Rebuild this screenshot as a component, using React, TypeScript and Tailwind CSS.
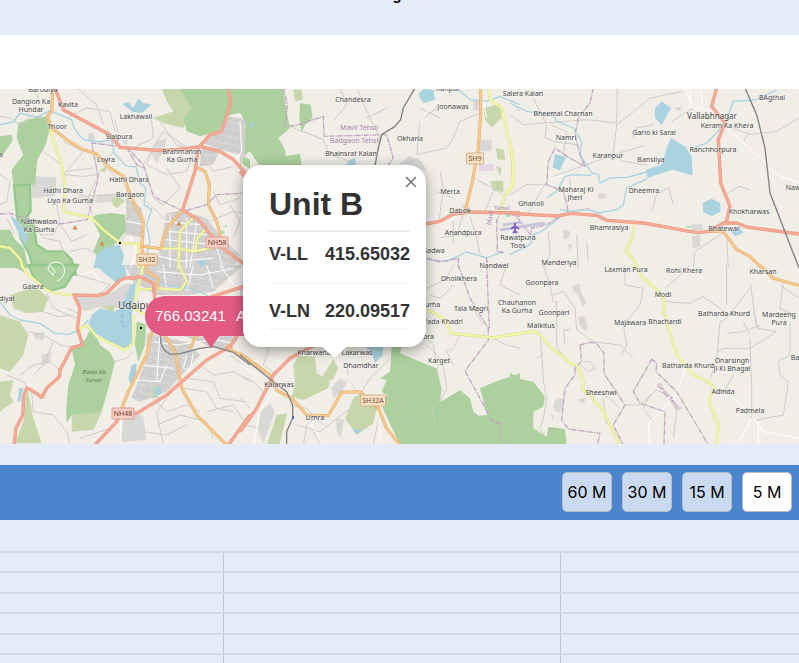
import { useState } from 'react';

type Layer =
  | 'built'
  | 'grey'
  | 'forest'
  | 'reserve'
  | 'scrub'
  | 'water'
  | 'river'
  | 'minor'
  | 'street'
  | 'boundary'
  | 'secondary'
  | 'primary'
  | 'trunk'
  | 'rail';

type Tile = { x: number; y: number } & Partial<Record<Layer, string>>;

// every tile is drawn at 3x and scaled down
const tiles: Tile[] = [
  {
    x: 0,
    y: 88,
    built:
      'M500 375L545 368L620 390L665 450L720 500L700 540H455L480 480ZM640 130L690 85L735 95L740 150L720 200L660 185L610 165ZM380 330L425 360L435 450L375 440ZM605 170L660 185L640 230L600 235Z',
    grey: 'M95 265L170 268L165 325L95 330ZM450 190L470 160L500 150L490 185L470 225ZM290 320L370 315L350 340L290 345ZM265 135L280 135L285 155L265 160ZM370 150L385 152L380 170L368 168Z',
    forest:
      'M0 145L35 140L38 158L12 195L0 205ZM140 85L148 130L135 175L112 215L105 290L40 290L35 245L70 200L50 150L55 105L90 92ZM290 380L330 375L375 380L378 430L345 468L300 515L280 490L300 440L275 390ZM540 2H750V95L720 75L690 80L650 130L600 145L560 130L550 90L575 60ZM730 205L750 215V240L728 230ZM0 425L30 425L45 455L72 480L85 540H0Z',
    reserve: 'M42 292L90 290L92 370L78 390L100 400L110 470L140 490L190 490L215 515L228 560H105L88 500L62 450L52 390Z',
    scrub: 'M485 0H540L578 50L550 120L490 105L460 90L520 70L500 40ZM335 330L355 325L375 340L350 360L338 350ZM300 245L320 235L315 255Z',
    water:
      'M368 48L385 42L400 60L415 30L430 45L455 50L425 75L398 72ZM30 380L55 400L85 440L75 475L55 435ZM280 540L290 500L312 480L358 470L372 500L365 540ZM592 520L608 514L622 524L602 536Z',
    river:
      'M0 110L40 102L60 75L110 88L150 68L215 95L225 125L250 155L300 162L335 155L342 195L380 235L408 236L420 285L437 300L432 350L455 365L440 410L450 460L440 500',
    minor:
      'M0 85L30 90L60 110L90 85L142 88M100 0L120 40M210 85L260 60L330 70L345 130M345 95L355 135M455 95L460 150L400 180M230 0L290 50L310 110M190 160L250 190L190 260L250 265L290 260M130 190L190 235M95 400L130 450L180 460L200 520M165 330L180 400L160 440L120 440M180 410L215 460L260 440M195 300L290 340M200 250L280 240M200 340L250 325L350 320M340 190L310 230L350 270M300 250L260 340L280 380M380 270L380 340L385 430L360 460M460 180L440 230L500 260L560 250L580 200M430 230L490 130L580 190M480 100L530 170L590 190M500 240L540 300L490 350L460 330M440 340L500 400L530 440M600 200L640 250L700 235M640 310L660 350L720 330M690 350L720 400L700 450M630 400L700 370L750 380M0 260L30 280L20 340L0 350M20 390L40 430L20 460M210 490L260 480L290 500M120 500L150 530',
    street:
      'M380 400L430 410M390 440L410 490L390 540M490 400L600 410M500 430L620 440M495 455L640 470M510 380V540M560 390V540M590 400L570 540M445 390L440 460L480 500M650 480L670 540M720 100L725 190L705 220M460 500L540 520L640 510',
    boundary:
      'M262 395L295 270L275 165L380 178L430 230L460 325L550 370L620 350L650 320L750 315M0 378L30 376L90 395L180 408L262 395M380 178L410 230L430 240',
    secondary:
      'M142 85L160 160L185 230L195 300L190 370L275 390L310 425L360 465L430 468M480 482L535 482L585 490L640 478M580 388L540 430L535 540M615 425L592 450L585 490M0 475L30 480L62 515L68 540M415 470V540',
    primary:
      'M158 0L155 70L142 85L155 120L200 155L250 185L290 198L330 240L370 265L395 330L430 400L425 480L440 540M590 238L615 250L628 290L625 350L650 400L668 465M548 365L510 410L490 450L482 482L430 475',
    trunk:
      'M165 0L190 65L330 140L360 178L480 188L560 182L600 175L660 190L700 215L750 270M685 0L692 45L665 130L630 140L595 180L585 250L548 365L600 400L640 450L680 490L735 530',
  },
  {
    x: 0,
    y: 265,
    built:
      'M375 0H730L640 80L560 90H470L400 50ZM440 205L560 230L600 270L500 380L420 410L395 400L440 280ZM520 200L720 210L690 260L620 240Z',
    grey: 'M230 95L330 85L380 55L400 60L395 80L360 130L300 125L250 140ZM125 270L155 260L150 290L125 305ZM100 205L135 200L130 225L105 222ZM370 425L430 455L440 525L365 530Z',
    forest:
      'M270 195L290 215L300 240L330 262L345 290L325 370L305 440L215 450L200 475L198 440L205 360L225 300L215 250L255 225ZM410 170L438 178L435 240L415 290L405 240ZM30 0H70L80 25L60 15Z',
    reserve: 'M85 0L105 45L150 78L195 65L235 0Z',
    scrub:
      'M30 90L75 75L110 65L145 100L130 140L80 145L40 130ZM0 150L60 170L85 210L70 270L30 320L0 310ZM0 350L40 345L30 390L40 410L0 440ZM82 370L100 460L125 535H45L70 470ZM215 440H305L280 495L215 500ZM300 125L345 120L340 142ZM455 370L470 360L475 398L458 400Z',
    water:
      'M285 0H375L380 30L355 60L320 30ZM275 150L300 130L340 140L365 130L392 60L408 50L395 160L400 240L375 255L320 225L262 190ZM395 300L410 295L405 350L395 365L385 340ZM462 370L482 363L485 385L465 396ZM58 370L70 368L62 410L52 408Z',
    river: 'M0 110L30 150L60 165L120 175L165 205L205 208L240 195L265 165M440 30L500 60L570 70L620 90L640 150',
    minor:
      'M140 85L160 130L230 160M130 140L175 155L220 150M85 200L130 210L180 240L215 248M60 330L100 300L150 290L180 315M20 330L70 350L90 380L140 400M100 330L130 300L160 230M200 130L235 145M95 380L100 440L160 450L200 500L210 540M240 520L330 490M345 290L380 280L400 260M290 95L330 60L270 40L230 30M460 400L500 440L560 420L600 440M470 480L540 450L620 470L640 520M560 340L640 350L660 400L740 410M600 300L640 330L700 320L750 350M620 440L700 420L740 480M430 500L500 510L560 480M690 270L730 300M550 370L620 380L650 430L700 440M500 400L470 440L490 540M0 200L40 230',
    street:
      'M460 230L530 240L640 225M560 270L550 310L570 315L580 265M400 345L480 350L500 300M480 200L470 350M360 525L365 460M470 20L600 30L700 10M490 0L500 80M580 0L560 80M620 0L640 70M240 30L280 20L300 50M420 300L520 310M660 0L700 60M590 210L700 235M150 0L165 20L155 30',
    secondary:
      'M65 0L80 25L140 75L165 85L222 90M410 75L470 70L540 75L560 50L537 0M400 150V235L375 255L290 215L262 180L240 190L242 205M430 0L415 60L400 130L440 150',
    primary:
      'M350 470L385 380L440 270L455 200M490 205L525 260L545 370L590 450L680 540M440 0V20L475 40L470 75M590 210L570 250M680 240L700 258L750 285',
    trunk:
      'M380 38L360 45L320 85L290 92L222 90L240 130L232 190L248 240L215 248L180 315L178 335L140 370L125 397L95 375L80 370L72 390L68 450L48 490L42 540M380 38L400 40L420 35L460 55L465 110M750 58L620 100M285 540L350 470L365 440L410 445L500 390L620 285L690 245L720 200M685 540L750 450',
    rail: 'M480 200L483 235L492 255L510 268L540 266L600 250L640 245L700 262L750 300',
  },
  {
    x: 240,
    y: 88,
    built: 'M0 90L15 100L20 200L0 240Z',
    grey: 'M715 155H755V190H715ZM700 40L720 35V70L700 65ZM480 225L510 205L545 220L560 250L540 240ZM665 350L690 355L680 380Z',
    forest:
      'M0 2H130L138 60L150 120L115 150L135 185L140 225L125 235H60L30 190L12 200L18 110L0 70ZM180 45L212 50L218 90L195 110L185 135L178 90ZM130 205L180 198L185 235H110Z',
    scrub:
      'M160 5H185L188 35L165 40ZM730 60L780 48L785 90L755 118L735 95ZM768 180L792 185L795 215L772 215ZM750 280L790 278L790 312L760 308ZM768 235L785 240L780 265Z',
    water: 'M535 20L550 3L580 5L585 35L550 45ZM325 220L345 208L348 232H318ZM28 110L40 98L38 125Z',
    river: 'M650 0L690 35L740 40L780 25L840 50M560 515L620 520L680 492L740 510L790 490',
    minor:
      'M350 0L385 80L420 150M590 60L540 100L530 200L620 180L640 150L660 100L720 75M150 115L250 155L270 200L330 220M600 250L610 300L597 400M700 270L760 300L790 320M760 310L735 370M670 380L650 440L600 450M690 385L710 450L720 500M590 310L640 330M480 230L540 210M540 60L600 90M820 50L840 70M300 0L320 50L280 100M380 90L440 60M640 400L640 470',
    street: 'M730 40L740 90M540 110L560 70L600 40',
    boundary:
      'M130 0L142 50L135 115L170 112L250 85L252 145L440 140L460 210L445 232M560 510L600 522L660 510M840 385L780 375L770 400L772 490L790 495M655 510V540M740 510V540',
    secondary: 'M745 0L750 35L785 60L800 130L818 200L820 290L790 330L785 370',
    primary: 'M722 0V80L715 180L695 290L675 370',
    trunk: 'M555 408L600 400L640 378L690 372L840 375M0 250L12 265',
    rail: 'M525 0L490 60L482 95L465 115L425 140L415 180L405 232',
  },
  {
    x: 240,
    y: 265,
    built: 'M0 60L10 70V160L0 150Z',
    grey: 'M60 440L90 415L105 440L70 535L55 500ZM275 370L300 340L320 350L305 380L280 400ZM288 460L312 462L302 520L290 500ZM250 325L275 308L280 325L260 342Z',
    forest:
      'M455 245L485 242L480 265L540 290L590 310L605 370L600 410L620 400L660 375L690 400L700 440L715 452L742 450L720 370L765 350L840 325V540H480L428 430L440 390L425 380L440 345L420 340L450 320Z',
    scrub:
      'M160 300L175 272L225 275L230 325L270 345L265 370L190 405L155 395L165 360ZM280 282L295 310L278 345L245 340ZM340 400L360 385L410 430L400 475L350 510L315 460ZM110 450L142 445L118 540H80Z',
    water: 'M370 242L430 240L428 270L405 295L395 262ZM335 490L365 495L350 508Z',
    minor:
      'M320 300L325 340L350 375M380 350L430 300L450 280M540 200L580 240L590 300M560 240L600 280L590 330M640 60L600 100L570 90M660 210L640 250L620 260L640 300M610 300L620 370L600 410L578 430L585 470M700 130L730 180M760 220L800 240L840 250M0 400L30 430M0 330L40 350L70 380M150 420L200 430L250 480M170 480L240 500L330 430M190 540L200 480L240 450M240 540L220 500M360 390L390 340M420 440L400 540M10 480L60 490M90 240L70 300L110 330M640 0L620 40L560 70M800 0L780 60L840 90',
    street: 'M0 300L50 330M320 330L355 378M100 380L60 440L40 540M415 430L420 530M210 470L245 530',
    boundary: 'M655 0L690 100L745 190V225L675 318L720 400L755 468L780 475V520L800 540M740 0L748 190',
    secondary: 'M555 130L610 160L635 205L760 218L840 205',
    primary: 'M0 265L90 330L110 375L155 400L200 450L265 452L305 382L360 380L415 430L440 490L480 540',
    trunk: 'M220 242L150 280L100 330L75 380L50 430L0 500',
    rail: 'M0 270L100 350L140 380L158 420V460L140 500V540',
  },
  {
    x: 510,
    y: 88,
    grey: 'M540 410L578 408V425L545 430ZM545 445L572 440L570 475L550 482ZM160 425L180 430L178 450L160 455ZM172 470L188 468L180 488ZM490 60L515 55L510 68ZM265 315L290 318L285 330L265 335ZM30 10L45 12L38 20Z',
    water:
      'M435 60L455 40L483 60L455 112L435 90ZM482 150L525 175L545 205L548 262L485 245L412 270L408 245L455 230L470 180ZM135 198L168 208L150 247L128 238ZM578 345L605 332L630 345L632 370L605 385L580 372ZM662 430L690 420L700 435L675 445Z',
    river:
      'M0 45L50 70L130 80L140 100L190 120L215 160L210 200L245 255L265 260L270 285L300 270L350 268L410 252M412 272L350 300L340 350L320 365L265 375L235 365L185 370L150 365M110 330L140 310L165 265L190 260L245 262M800 5L740 35L670 40L650 95L620 135L590 165L540 185M0 500L60 470L70 440L95 430L160 380',
    minor:
      'M0 80L40 110L230 95L320 105M70 30L110 110L105 150L130 160L200 170M310 195L320 110L360 80L420 30L520 10M320 110L322 0M55 375L115 270L230 230L310 200L405 172M310 200L340 220L415 232M425 370L440 320L475 300L490 350M645 320L690 295L720 305M640 435L555 490L550 540M650 440L655 540M115 430L120 500L100 540M670 120L720 140L800 130L867 90M180 270L185 370L240 360M0 320L50 290L110 290M120 110L170 130L160 200M200 440L205 540M230 460L235 520M370 150L380 120L430 110M700 160L720 130M485 100L550 60',
    street:
      'M520 0L550 50L580 60L570 0M550 60L640 75M650 120L740 200L800 260L867 285M540 0V60M90 300L115 270L190 260M185 390L180 300',
    boundary:
      'M250 0L240 45L205 90L195 140L210 200L225 235L170 205L135 180L115 220L110 290L160 310L175 370L110 410L65 420L62 440L50 425L15 380',
    secondary: 'M372 407L370 440L347 490L372 515L382 540M0 170L10 230L5 290L0 310',
    primary: 'M600 430H640L680 485L720 505L755 540',
    trunk:
      'M0 376L140 384L185 376L260 382L290 397L400 405L560 434L600 430L640 405H680L710 417L867 438M620 0L605 55L645 105L625 155L632 285L660 355L648 405',
    rail: 'M705 0L740 80L765 180L780 315L867 540',
  },
  {
    x: 510,
    y: 265,
    grey: 'M187 60L210 58L212 80L228 110L218 125L205 90L190 80ZM205 155L225 155L233 185L225 198L208 180ZM135 405L160 400V425L145 445L130 430ZM120 448L132 450L128 465ZM200 405L228 398L222 415Z',
    forest: 'M0 320L20 340L70 350L105 395L100 425L70 440V490L110 515L115 485L165 492L170 540H0Z',
    minor:
      'M100 0L120 60L130 110L140 110V250L165 275M90 200L95 270L80 280M95 260L100 350L110 400L100 460L90 490L105 515M130 90L160 80L195 130L200 195L250 230L330 240L370 280M345 0V60L400 70L390 120L340 180L350 240L335 270M465 110L540 115L580 95L630 130L650 150L720 140M540 0L500 40L465 70M650 0V120M720 70L650 160L630 170L620 290L600 340M730 140L745 190L800 200L720 250L640 250L625 260M722 60L740 190M720 220L725 360V460M820 50L810 130L850 150M840 170V270L805 290L810 330L835 350L820 450L740 465M750 180L700 200L650 205M180 195L160 195L165 240M220 290L240 290L255 310L235 320L210 300M345 420L390 420L440 375L470 390M420 390L400 430L430 470M480 390L500 440L490 520M660 380L610 370M700 170L720 210M810 60L867 100M230 370L300 400L330 430M640 385L670 330M280 400L290 480',
    street: 'M525 310L510 360L490 400L440 450L415 480L420 540M660 390L725 450L760 500L867 520M725 460L700 510L670 540M745 470V540',
    boundary:
      'M210 240L240 232L260 235L282 265V325L345 420L310 480L340 540M210 240L215 290L195 305V330L165 370L155 465L175 492L270 505L262 540M425 282L440 295L438 320L500 380L560 480L595 540M425 282L410 310L370 380L390 415L465 440L462 540',
    secondary:
      'M0 210L70 200L90 210L125 250L160 275L180 295L200 300L220 350L218 375L245 390L250 405L275 430L310 500L330 540M375 0L400 40L435 70L460 100L463 140L475 190L500 270L550 330L595 350L610 365L598 410L625 480L620 540',
    primary: 'M750 0L790 40L867 62',
  },
];

const layers: { key: Layer; fill?: string; stroke?: string; width?: number; dash?: string }[] = [
  { key: 'built', fill: 'url(#streets)' },
  { key: 'grey', fill: '#dad8d6' },
  { key: 'scrub', fill: '#c8d7ab' },
  { key: 'forest', fill: '#add19e' },
  { key: 'reserve', fill: '#add19e', stroke: '#93c88b', width: 7 },
  { key: 'water', fill: '#aad3df' },
  { key: 'minor', stroke: '#cfccca', width: 3 },
  { key: 'street', stroke: '#ffffff', width: 3 },
  { key: 'river', stroke: '#aad3df', width: 4 },
  { key: 'boundary', stroke: '#c3a5c2', width: 4, dash: '16 3 4 3' },
  { key: 'secondary', stroke: '#d3d689', width: 8 },
  { key: 'secondary', stroke: '#f4f8a5', width: 6 },
  { key: 'primary', stroke: '#dda967', width: 9 },
  { key: 'primary', stroke: '#fac98b', width: 6 },
  { key: 'trunk', stroke: '#e59780', width: 10 },
  { key: 'trunk', stroke: '#f6aa95', width: 7 },
  { key: 'rail', stroke: '#7c7c7c', width: 4 },
  { key: 'rail', stroke: '#b5b5b5', width: 1, dash: '8 8' },
];

const places: [string, number, number][] = [
  ['Barodiya', 43, 92],
  ['Dangion Ka', 31, 104],
  ['Hundar', 31, 112],
  ['Kavita', 68, 107],
  ['Lakhawali', 136, 119],
  ['Thoor', 57, 129],
  ['Sialpura', 119, 139],
  ['Loyra', 106, 162],
  ['Brahmanon', 182, 154],
  ['Ka Gurha', 182, 162],
  ['Hathi Dhara', 129, 182],
  ['Bargaon', 130, 197],
  ['Hathi Dhara', 63, 193],
  ['Liyo Ka Gurha', 70, 203],
  ['Nathwaton', 39, 224],
  ['Ka Gurha', 39, 232],
  ['Galera', 33, 289],
  ['diyat', 7, 301],
  ['a', 1, 157],
  ['Chandesra', 353, 102],
  ['Joonawas', 453, 109],
  ['Kanpur', 448, 91],
  ['Salera Kalan', 523, 96],
  ['Okharia', 410, 141],
  ['Bhainsrat Kalan', 351, 156],
  ['Merta', 450, 194],
  ['Dabok', 460, 213],
  ['Anandpura', 463, 235],
  ['Sadwa', 434, 253],
  ['Nandwel', 494, 268],
  ['Rawatpura', 518, 240],
  ['Toos', 518, 248],
  ['Dholikhera', 459, 281],
  ['Tala Magri', 471, 311],
  ['Pada Khadri', 443, 324],
  ['Gurha', 430, 307],
  ['Kharwaria', 314, 355],
  ['Lakarwas', 357, 355],
  ['Dhamdhar', 361, 368],
  ['Karget', 439, 363],
  ['Kalarwas', 279, 387],
  ['Umra', 315, 420],
  ['Bhora', 424, 339],
  ['Bheemal Charnan', 563, 116],
  ['Namri', 566, 140],
  ['Gario ki Sarai', 654, 135],
  ['Karanpur', 608, 158],
  ['Bansliya', 651, 162],
  ['Ranchhorpura', 713, 152],
  ['Keram Ka Khera', 727, 128],
  ['BAgthal', 772, 100],
  ['Nawa', 795, 190],
  ['Maharaj Ki', 576, 192],
  ['Jheri', 575, 200],
  ['Ghanoli', 531, 206],
  ['Dheemra', 644, 193],
  ['Bhamrasiya', 609, 230],
  ['Bhatewar', 724, 231],
  ['Khokharwas', 749, 214],
  ['Manderiya', 559, 265],
  ['Laxman Pura', 626, 272],
  ['Rohi Khera', 684, 273],
  ['Kharsan', 763, 274],
  ['Goonpara', 542, 285],
  ['Chauhanon', 517, 305],
  ['Ka Gurha', 517, 313],
  ['Goonpari', 554, 315],
  ['Malkitus', 541, 328],
  ['Modi', 663, 297],
  ['Majawara', 630, 325],
  ['Bhachardi', 665, 324],
  ['Batharda Khurd', 724, 316],
  ['Mardeeng', 779, 317],
  ['Pura', 779, 325],
  ['Batharda Khurd', 688, 368],
  ['Onarsingh', 732, 363],
  ['Ji Ki Bhagal', 732, 371],
  ['Ba', 795, 360],
  ['Sheeshwi', 601, 395],
  ['Adinda', 723, 394],
  ['Padmela', 750, 413],
];

const shields: { name: string; x: number; y: number; w: number; trunk?: boolean }[] = [
  { name: 'NH58', x: 217, y: 243, w: 22, trunk: true },
  { name: 'NH48', x: 123, y: 414, w: 22, trunk: true },
  { name: 'SH32', x: 147, y: 260, w: 20 },
  { name: 'SH32A', x: 373, y: 401, w: 25 },
  { name: 'SH9', x: 475, y: 159, w: 17 },
];

function MapTerrain() {
  return (
    <svg viewBox="0 89 799 355" preserveAspectRatio="xMidYMid slice" className="block h-full w-full bg-[#f1eee8]" role="img" aria-label="Map of Udaipur and Vallabhnagar">
      <defs>
        <pattern id="streets" width="26" height="22" patternUnits="userSpaceOnUse" patternTransform="rotate(12)">
          <rect width="26" height="22" fill="#d8d6d4" />
          <path d="M0 6H14V22M14 13H26M20 0V13M4 6V17H14" stroke="#cac8c6" strokeWidth="3" fill="none" />
        </pattern>
      </defs>
      {layers.map((layer, i) => (
        <g key={i} fill={layer.fill || 'none'} stroke={layer.stroke} strokeWidth={layer.width} strokeDasharray={layer.dash} strokeLinejoin="round">
          {tiles.map((tile) =>
            tile[layer.key] ? <path key={`${tile.x}-${tile.y}`} d={tile[layer.key]} transform={`translate(${tile.x} ${tile.y}) scale(0.33333)`} /> : null
          )}
        </g>
      ))}

      {/* lake loop inside the reserve */}
      <path d="M48 270C48 262 56 260 62 264C67 269 64 279 57 281M48 270L54 276" fill="none" stroke="#fff" strokeWidth="1" />
      {/* airport */}
      <path d="M500 230L545 223M503 225L522 222" stroke="#c7c6d8" strokeWidth="3" />
      <rect x="479" y="164" width="15" height="7" fill="#e6d6e6" />
      <path d="M515 223V233M511 229L515 226L519 229M513 233L515 231L517 233" stroke="#8461c4" strokeWidth="2" fill="none" />
      <path d="M122 302V325M130 300V322M122 326H128" stroke="#8fb0ea" strokeWidth="1" strokeDasharray="4 2" />
      {/* peaks */}
      <path d="M75 225l2.500 4.500h-5zM102 241l2.500 4.500h-5zM179 221l2.500 4.500h-5z" fill="#d08a50" />
      <path d="M119 242h2v2h-2zM140 327h2v2h-2z" fill="#111" />
      <path d="M292 416h2v3h-2z" fill="#5566c0" />
      <circle cx="223" cy="232" r="1.500" fill="#8fe0bd" />
      <circle cx="226" cy="226" r="1" fill="#8fe0bd" />
      <path d="M686 226h4v2h-4zM506 215h4v2h-4z" fill="#9fe3c3" />

      <g fontFamily='"Noto Sans", sans-serif' textAnchor="middle" fontSize="7">
        <g fill="#3f3f3f" stroke="#ffffff" strokeOpacity="0.6" strokeWidth="1" paintOrder="stroke">
          {places.map(([name, x, y]) => (
            <text key={`${name}-${x}-${y}`} x={x} y={y}>{name}</text>
          ))}
          <text x="712" y="119" fontSize="8">Vallabhnagar</text>
          <text x="137" y="309" fontSize="10">Udaipur</text>
        </g>
        <g fill="#5f7f58" fontStyle="italic" fontSize="6">
          <text x="94" y="374">Banki Ka</text>
          <text x="94" y="382">Forest</text>
        </g>
        <g fill="#ad85ac">
          <text x="359" y="130">Mavli Tehsil</text>
          <text x="355" y="143">Badgaon Tehsil</text>
          <text x="502" y="210" fontSize="6">Tehsil</text>
          <text x="492" y="218" fontSize="6" transform="rotate(-80 492 218)">Mavli</text>
          <text x="669" y="399" fontSize="6" transform="rotate(50 669 397)">Girwa Tehsil</text>
        </g>
        {shields.map((s) => (
          <g key={s.name}>
            <rect x={s.x - s.w / 2} y={s.y - 6} width={s.w} height="11" rx="1" fill={s.trunk ? '#f7cfc5' : '#fbe2c6'} stroke={s.trunk ? '#dc9f93' : '#d9ae80'} />
            <text x={s.x} y={s.y + 2} fill={s.trunk ? '#7a3428' : '#6b471f'}>{s.name}</text>
          </g>
        ))}
      </g>
    </svg>
  );
}

const readings = [
  { label: 'V-LL', value: '415.65032' },
  { label: 'V-LN', value: '220.09517' },
];

const ranges = ['60 M', '30 M', '15 M', '5 M'];

export default function App() {
  const [open, setOpen] = useState(true);
  const [range, setRange] = useState('5 M');

  return (
    <div className="min-h-screen overflow-hidden bg-[#e5ecf8] font-['Liberation_Sans',Arial,sans-serif] text-[#333]">
      <header className="flex h-[35px] justify-center overflow-hidden pr-10">
        <h2 className="-mt-[15px] font-['Inter',sans-serif] text-sm leading-5 font-bold text-black">Rating</h2>
      </header>

      <section className="bg-white pt-[54px]">
        <div className="relative h-[355px] overflow-hidden">
          <MapTerrain />

          <div className="absolute top-[207px] left-[145px] flex h-10 w-[132px] items-center gap-[10px] rounded-full bg-[#e35b85] pl-[10px] text-[15px] text-white">
            <span>766.03241</span>
            <span>A</span>
            <span className="absolute top-full left-1/2 -mt-px h-[13px] w-[18px] -translate-x-1/2 bg-[#e35b85] [clip-path:polygon(0_0,100%_0,50%_100%)]"></span>
          </div>

          {open && (
            <div className="absolute top-[76px] left-[243px] w-[183px] rounded-[18px] bg-white pt-4 pr-4 pb-[17px] pl-[26px] shadow-[0_3px_14px_rgba(0,0,0,0.4)]">
              <button type="button" aria-label="Close popup" onClick={() => setOpen(false)} className="absolute top-[11px] right-[9px] text-[#757575]">
                <svg width="12" height="12" viewBox="0 0 12 12" fill="none" stroke="currentColor" strokeWidth="1.500">
                  <path d="M1 1L11 11M11 1L1 11" />
                </svg>
              </button>
              <h1 className="h-[51px] border-b-2 border-[#f0f0f0] text-[32px] leading-[46px] font-bold">Unit B</h1>
              <table className="w-full text-lg leading-5 font-bold">
                <tbody>
                  {readings.map((r) => (
                    <tr key={r.label} className="group h-[51px] border-b-2 border-[#f8f8f8] last:h-[46px]">
                      <th scope="row" className="pt-3 text-left align-top group-last:pt-[17px]">{r.label}</th>
                      <td className="pt-3 text-right align-top group-last:pt-[17px]">{r.value}</td>
                    </tr>
                  ))}
                </tbody>
              </table>
              <span className="absolute top-full left-1/2 -mt-px h-3 w-[26px] -translate-x-1/2 bg-white [clip-path:polygon(0_0,100%_0,50%_100%)]"></span>
            </div>
          )}
        </div>
      </section>

      <div className="mt-[21px] flex h-[55px] items-start justify-end gap-[10px] bg-[#4d84d0] pt-[7px] pr-[7px]">
        {ranges.map((r) => (
          <button
            key={r}
            type="button"
            aria-pressed={range === r}
            onClick={() => setRange(r)}
            className={`h-10 w-[50px] rounded-[5px] border border-[#b9bcc2] font-['Inter',sans-serif] text-base text-black ${range === r ? 'bg-white' : 'bg-[#c9daf1]'}`}
          >
            {r}
          </button>
        ))}
      </div>

      {/* chart grid */}
      <div className="mt-[31px] h-28 overflow-hidden">
        {[0, 1, 2, 3, 4, 5].map((row) => (
          <div key={row} className="grid grid-cols-[223fr_337fr_239fr] border-t-2 border-[#d3d9e5] odd:h-5 even:h-[21px]">
            <div></div>
            <div className="border-l border-[#c0c7d5]"></div>
            <div className="border-l border-[#c0c7d5]"></div>
          </div>
        ))}
      </div>
    </div>
  );
}
